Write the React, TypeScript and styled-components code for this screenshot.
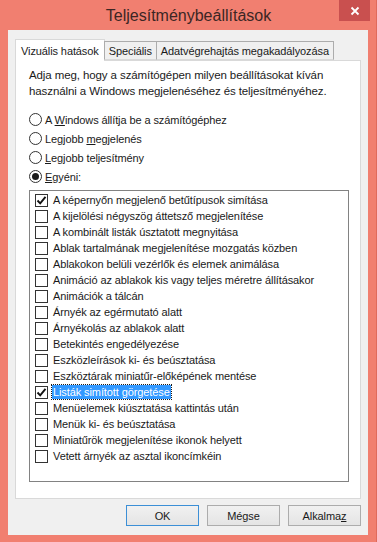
import React from 'react';
import styled, { createGlobalStyle } from 'styled-components';

// Windows 8 style colours
const theme = {
  frame: '#f17f70',
  frameEdge: '#e06a5c',
  closeBg: '#c9504f',
  client: '#f0f0f0',
  tabBorder: '#d9d9d9',
  idleTabBorder: '#acacac',
  listBorder: '#828282',
  text: '#1a1a1a',
  select: '#3399ff',
};

const GlobalStyle = createGlobalStyle`
  html, body {
    margin: 0;
    padding: 0;
    background: ${theme.frame};
  }
  body {
    font-family: "Liberation Sans", Arial, sans-serif;
    font-size: 11px;
    letter-spacing: -0.1px;
    color: ${theme.text};
  }
`;

const Window = styled.div`
  width: 377px;
  height: 542px;
  box-sizing: border-box;
  background: ${theme.frame};
  border-right: 1px solid ${theme.frameEdge};
  display: flex;
  flex-direction: column;
`;

const TitleBar = styled.div`
  height: 30px;
  display: grid;
  grid-template-columns: 38px 1fr 31px;
  padding-right: 6px;
  align-items: start;
`;

const Title = styled.div`
  grid-column: 2;
  text-align: center;
  font-size: 16px;
  letter-spacing: 0;
  line-height: 31px;
  color: #3b2624;
`;

const CloseButton = styled.div`
  grid-column: 3;
  height: 21px;
  background: ${theme.closeBg};
  display: flex;
  align-items: center;
  justify-content: center;
`;

const Client = styled.div`
  flex: 1;
  margin: 0 8px 7px 8px;
  background: ${theme.client};
  padding: 9px 7px 0 7px;
  display: flex;
  flex-direction: column;
`;

const TabRow = styled.div`
  display: flex;
  align-items: flex-end;
  height: 21px;
  position: relative;
  z-index: 1;
`;

const Tab = styled.div<{ $active?: boolean }>`
  box-sizing: border-box;
  height: ${(p) => (p.$active ? '22px' : '19px')};
  padding: ${(p) => (p.$active ? '3px 5px 0 5px' : '1px 4px 0 4px')};
  background: ${(p) => (p.$active ? '#ffffff' : theme.client)};
  border: 1px solid ${(p) => (p.$active ? theme.tabBorder : theme.idleTabBorder)};
  border-bottom: ${(p) => (p.$active ? 'none' : `1px solid ${theme.tabBorder}`)};
  margin-left: ${(p) => (p.$active ? '0' : '-1px')};
  line-height: 16px;
  white-space: nowrap;
  margin-bottom: ${(p) => (p.$active ? '-1px' : '0')};
`;

const Panel = styled.div`
  box-sizing: border-box;
  height: 439px;
  background: #ffffff;
  border: 1px solid ${theme.tabBorder};
  padding: 6px 11px 0 13px;
`;

const Intro = styled.p`
  margin: 0;
  font-size: 11.5px;
  line-height: 16px;
`;

const RadioGroup = styled.div`
  margin-top: 11px;
  display: flex;
  flex-direction: column;
`;

const RadioRow = styled.div`
  height: 19px;
  display: flex;
  align-items: center;
  gap: 3px;
`;

const RadioCircle = styled.span<{ $on?: boolean }>`
  box-sizing: border-box;
  width: 13px;
  height: 13px;
  border-radius: 50%;
  border: 1px solid #333333;
  background: #ffffff;
  display: flex;
  align-items: center;
  justify-content: center;
  &::after {
    content: '';
    width: 7px;
    height: 7px;
    border-radius: 50%;
    background: ${(p) => (p.$on ? '#1a1a1a' : 'transparent')};
  }
`;

const Key = styled.span`
  text-decoration: underline;
`;

const ListBox = styled.div`
  box-sizing: border-box;
  width: 320px;
  height: 292px;
  margin-top: 4px;
  border: 1px solid ${theme.listBorder};
  padding: 1px 0 0 5px;
`;

const CheckRow = styled.div`
  height: 16px;
  display: flex;
  align-items: center;
  gap: 4px;
`;

const CheckBox = styled.span`
  box-sizing: border-box;
  width: 13px;
  height: 13px;
  border: 1px solid #333333;
  background: #ffffff;
  display: flex;
  align-items: center;
  justify-content: center;
`;

const CheckLabel = styled.span<{ $selected?: boolean }>`
  padding: 0 1px;
  line-height: 14px;
  background: ${(p) => (p.$selected ? theme.select : 'transparent')};
  color: ${(p) => (p.$selected ? '#ffffff' : theme.text)};
  outline: ${(p) => (p.$selected ? '1px dotted #1a1a1a' : 'none')};
`;

const ButtonRow = styled.div`
  display: flex;
  justify-content: flex-end;
  gap: 8px;
  margin-top: 6px;
`;

const Button = styled.div<{ $default?: boolean }>`
  box-sizing: border-box;
  width: 73px;
  height: 21px;
  display: flex;
  align-items: center;
  justify-content: center;
  background: linear-gradient(#f1f1f1, #e4e4e4);
  border: 1px solid ${(p) => (p.$default ? '#3c8fd6' : theme.idleTabBorder)};
`;

const Check = () => (
  <svg width="11" height="11" viewBox="0 0 11 11">
    <path d="M1.5 5.5 L4.2 8.3 L9.5 1.8" fill="none" stroke="#111" strokeWidth="1.9" />
  </svg>
);

const CloseIcon = () => (
  <svg width="10" height="10" viewBox="0 0 10 10">
    <path d="M1.5 1.5 L8.5 8.5 M8.5 1.5 L1.5 8.5" stroke="#ffffff" strokeWidth="1.8" />
  </svg>
);

const options: { label: string; checked?: boolean; selected?: boolean }[] = [
  { label: 'A képernyőn megjelenő betűtípusok simítása', checked: true },
  { label: 'A kijelölési négyszög áttetsző megjelenítése' },
  { label: 'A kombinált listák úsztatott megnyitása' },
  { label: 'Ablak tartalmának megjelenítése mozgatás közben' },
  { label: 'Ablakokon belüli vezérlők és elemek animálása' },
  { label: 'Animáció az ablakok kis vagy teljes méretre állításakor' },
  { label: 'Animációk a tálcán' },
  { label: 'Árnyék az egérmutató alatt' },
  { label: 'Árnyékolás az ablakok alatt' },
  { label: 'Betekintés engedélyezése' },
  { label: 'Eszközleírások ki- és beúsztatása' },
  { label: 'Eszköztárak miniatűr-előképének mentése' },
  { label: 'Listák simított görgetése', checked: true, selected: true },
  { label: 'Menüelemek kiúsztatása kattintás után' },
  { label: 'Menük ki- és beúsztatása' },
  { label: 'Miniatűrök megjelenítése ikonok helyett' },
  { label: 'Vetett árnyék az asztal ikoncímkéin' },
];

const App: React.FC = () => (
  <>
    <GlobalStyle />
    <Window>
      <TitleBar>
        <Title>Teljesítménybeállítások</Title>
        <CloseButton>
          <CloseIcon />
        </CloseButton>
      </TitleBar>
      <Client>
        <TabRow>
          <Tab $active>Vizuális hatások</Tab>
          <Tab>Speciális</Tab>
          <Tab>Adatvégrehajtás megakadályozása</Tab>
        </TabRow>
        <Panel>
          <Intro>
            Adja meg, hogy a számítógépen milyen beállításokat kíván
            <br />
            használni a Windows megjelenéséhez és teljesítményéhez.
          </Intro>
          <RadioGroup>
            <RadioRow>
              <RadioCircle />
              <span>
                A <Key>W</Key>indows állítja be a számítógéphez
              </span>
            </RadioRow>
            <RadioRow>
              <RadioCircle />
              <span>
                Legjobb <Key>m</Key>egjelenés
              </span>
            </RadioRow>
            <RadioRow>
              <RadioCircle />
              <span>
                <Key>L</Key>egjobb teljesítmény
              </span>
            </RadioRow>
            <RadioRow>
              <RadioCircle $on />
              <span>
                <Key>E</Key>gyéni:
              </span>
            </RadioRow>
          </RadioGroup>
          <ListBox>
            {options.map((o) => (
              <CheckRow key={o.label}>
                <CheckBox>{o.checked && <Check />}</CheckBox>
                <CheckLabel $selected={o.selected}>{o.label}</CheckLabel>
              </CheckRow>
            ))}
          </ListBox>
        </Panel>
        <ButtonRow>
          <Button $default>OK</Button>
          <Button>Mégse</Button>
          <Button>
            <span>
              Alkalma<Key>z</Key>
            </span>
          </Button>
        </ButtonRow>
      </Client>
    </Window>
  </>
);

export default App;
